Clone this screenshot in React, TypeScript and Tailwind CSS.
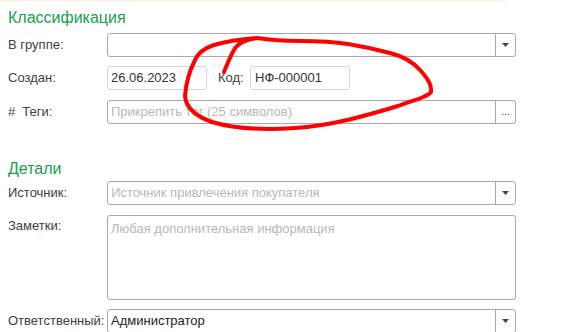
import React from "react";

const Arrow = () => (
  <svg width="7" height="4" viewBox="0 0 7 4" className="block">
    <path d="M0 0 H7 L3.5 4 Z" fill="#444" />
  </svg>
);

function Label({ children, top }: { children: React.ReactNode; top?: boolean }) {
  return (
    <div className={`w-[99px] shrink-0 text-[13px] text-[#404040] ${top ? "pt-[1px]" : ""}`}>{children}</div>
  );
}

export default function App() {
  return (
    <div
      className="relative w-[587px] h-[332px] overflow-hidden bg-white"
      style={{ fontFamily: '"Liberation Sans", Arial, sans-serif' }}
    >
      <div className="h-[2px] w-[507px] bg-[#fcf6e8]" />
      <div className="pl-[8px]">
        <div className="mt-[6px] h-[20px] text-[16px] leading-[20px] text-[#17a04a]">Классификация</div>

        <div className="mt-[5px] flex items-center h-[24px]">
          <Label>В группе:</Label>
          <div className="flex h-[24px] w-[409px] rounded-[3px] border border-[#a8a8a8] bg-white">
            <div className="flex-1" />
            <div className="flex w-[20px] items-center justify-center border-l border-[#a8a8a8]">
              <Arrow />
            </div>
          </div>
        </div>

        <div className="mt-[9px] flex items-center h-[24px]">
          <Label>Создан:</Label>
          <div className="flex h-[24px] w-[100px] items-center rounded-[3px] border border-[#d6d6d6] pl-[3px] text-[13px] text-[#333]">
            26.06.2023
          </div>
          <div className="ml-[11px] w-[32px] text-[13px] text-[#404040]">Код:</div>
          <div className="flex h-[24px] w-[100px] items-center rounded-[3px] border border-[#d6d6d6] pl-[4px] text-[13px] text-[#333]">
            НФ-000001
          </div>
        </div>

        <div className="mt-[10px] flex items-center h-[24px]">
          <Label>
            <span>#</span>
            <span className="ml-[7px]">Теги:</span>
          </Label>
          <div className="flex h-[24px] w-[409px] rounded-[3px] border border-[#a8a8a8] bg-white">
            <div className="flex flex-1 items-center pl-[3px] text-[13px] text-[#b8b8b8]">
              Прикрепить тег (25 символов)
            </div>
            <div className="flex w-[20px] items-center justify-center border-l border-[#a8a8a8] text-[11px] leading-none text-[#444] pb-[2px]">
              ...
            </div>
          </div>
        </div>

        <div className="mt-[35px] h-[20px] text-[16px] leading-[20px] text-[#17a04a]">Детали</div>

        <div className="mt-[2px] flex items-center h-[24px]">
          <Label>Источник:</Label>
          <div className="flex h-[24px] w-[409px] rounded-[3px] border border-[#a8a8a8] bg-white">
            <div className="flex flex-1 items-center pl-[3px] text-[13px] text-[#b8b8b8]">
              Источник привлечения покупателя
            </div>
            <div className="flex w-[20px] items-center justify-center border-l border-[#a8a8a8]">
              <Arrow />
            </div>
          </div>
        </div>

        <div className="mt-[10px] flex items-start h-[85px]">
          <Label top>Заметки:</Label>
          <div className="h-[85px] w-[409px] rounded-[3px] border border-[#a8a8a8] bg-white pl-[3px] pt-[3px] text-[13px] text-[#b8b8b8]">
            Любая дополнительная информация
          </div>
        </div>

        <div className="mt-[9px] flex items-center h-[24px]">
          <Label>Ответственный:</Label>
          <div className="flex h-[24px] w-[409px] rounded-[3px] border border-[#a8a8a8] bg-white">
            <div className="flex flex-1 items-center pl-[3px] text-[13px] text-[#222]">Администратор</div>
            <div className="flex w-[20px] items-center justify-center border-l border-[#a8a8a8]">
              <Arrow />
            </div>
          </div>
        </div>
      </div>

      <svg className="pointer-events-none absolute inset-0" width="587" height="332" viewBox="0 0 587 332">
        <path
          d="M224,72 C228,62 232,52 236,47 C240,42 248,39 257,38 C245,39 228,41 214,45 C205,48 198,53 195,60 C190,70 186,82 185,96 C186,108 195,116 212,122 C235,129 265,130 295,128 C330,126 365,116 398,106 C414,100 428,97 431,92 C432,85 428,79 420,70 C412,61 402,56 390,53 C375,49 360,46 348,44 C335,42 320,41 300,41 C283,41 270,40 257,38"
          fill="none"
          stroke="#ff0000"
          strokeWidth="4"
          strokeLinecap="round"
          strokeLinejoin="round"
        />
      </svg>
    </div>
  );
}
